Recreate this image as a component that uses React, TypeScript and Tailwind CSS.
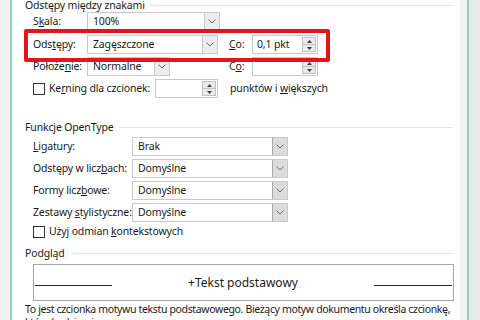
import React from "react";

const FONT = { fontFamily: '"Noto Sans", "Open Sans", sans-serif' };

function Chevron() {
  return (
    <svg width="8" height="5" viewBox="0 0 8 5" className="block">
      <path d="M0.5 0.5 L4 4 L7.5 0.5" fill="none" stroke="#6b6b6b" strokeWidth="1" />
    </svg>
  );
}

function Select({ value, width, dark }: { value: string; width: number; dark?: boolean }) {
  return (
    <div
      className="flex h-[19px] border border-[#c9c9c9] bg-white"
      style={{ width }}
    >
      <div className="flex-1 pl-[5px] leading-[17px] text-[#1a1a1a] truncate">{value}</div>
      <div
        className={
          dark
            ? "w-[15px] flex items-center justify-center bg-[#dcdcdc] border-l border-[#a9a9a9]"
            : "w-[15px] flex items-center justify-center bg-[#ececec] border-l border-[#c9c9c9]"
        }
      >
        <Chevron />
      </div>
    </div>
  );
}

function Spin({ value, width }: { value?: string; width: number }) {
  return (
    <div className="flex h-[19px] border border-[#c9c9c9] bg-white" style={{ width }}>
      <div className="flex-1 pl-[4px] leading-[17px] text-[#1a1a1a]">{value}</div>
      <div className="w-[14px] my-[1px] mr-[1px] flex flex-col border border-[#c2c2c2] bg-[#ebebeb]">
        <div className="flex-1 flex items-center justify-center border-b border-[#c2c2c2]">
          <svg width="5" height="3" viewBox="0 0 5 3">
            <path d="M0 3 L2.5 0 L5 3 Z" fill="#404040" />
          </svg>
        </div>
        <div className="flex-1 flex items-center justify-center">
          <svg width="5" height="3" viewBox="0 0 5 3">
            <path d="M0 0 L2.5 3 L5 0 Z" fill="#404040" />
          </svg>
        </div>
      </div>
    </div>
  );
}

function Checkbox() {
  return <div className="w-[12px] h-[12px] border border-[#333333] bg-white shrink-0" />;
}

function Heading({ text }: { text: string }) {
  return (
    <div className="flex items-center h-[14px] pl-[13px] pr-[7px]">
      <span className="leading-[14px] text-[#1a1a1a] pr-[6px] whitespace-nowrap">{text}</span>
      <div className="flex-1 h-px bg-[#e3e3e3]" />
    </div>
  );
}

export default function App() {
  return (
    <div
      className="w-[480px] h-[320px] overflow-hidden flex bg-[#ececec] text-[10.5px] tracking-[-0.15px]"
      style={FONT}
    >
      <div className="w-[10px] bg-[#f1f1f1]" />
      <div className="w-[2px] bg-[#92d2b6]" />
      <div className="w-[448px] bg-white relative">
        <div className="-mt-[2px]">
          <Heading text="Odstępy między znakami" />
        </div>

        <div className="pl-[21px] flex items-center h-[19px]">
          <div className="w-[54px] text-[#1a1a1a] whitespace-nowrap">
            S<u>k</u>ala:
          </div>
          <Select value="100%" width={133} />
        </div>

        <div className="pl-[21px] flex items-center h-[19px] mt-[4px]">
          <div className="w-[54px] text-[#1a1a1a] whitespace-nowrap">
            Ods<u>t</u>ępy:
          </div>
          <div className="w-[142px]">
            <Select value="Zagęszczone" width={131} />
          </div>
          <div className="w-[23px] text-[#1a1a1a]">
            <u>C</u>o:
          </div>
          <Spin value="0,1 pkt" width={66} />
        </div>

        <div className="pl-[21px] flex items-center h-[19px] mt-[3px]">
          <div className="w-[54px] text-[#1a1a1a] whitespace-nowrap">
            Położe<u>n</u>ie:
          </div>
          <div className="w-[142px]">
            <Select value="Normalne" width={83} />
          </div>
          <div className="w-[23px] text-[#1a1a1a]">
            C<u>o</u>:
          </div>
          <Spin width={66} />
        </div>

        <div className="pl-[21px] flex items-center h-[19px] mt-[3px]">
          <Checkbox />
          <div className="w-[110px] pl-[4px] text-[#1a1a1a] whitespace-nowrap">
            Ke<u>r</u>ning dla czcionek:
          </div>
          <Spin width={63} />
          <div className="pl-[12px] text-[#1a1a1a] whitespace-nowrap">
            punktów i <u>w</u>iększych
          </div>
        </div>

        <div className="mt-[22px]">
          <Heading text="Funkcje OpenType" />
        </div>

        {[
          { label: <><u>L</u>igatury:</>, value: "Brak" },
          { label: <>Odstępy w licz<u>b</u>ach:</>, value: "Domyślne" },
          { label: <>Formy licz<u>b</u>owe:</>, value: "Domyślne" },
          { label: <>Zestawy <u>s</u>tylistyczne:</>, value: "Domyślne" },
        ].map((row, i) => (
          <div key={i} className="pl-[21px] flex items-center h-[19px] mt-[3px]">
            <div className="w-[99px] text-[#1a1a1a] whitespace-nowrap">{row.label}</div>
            <Select value={row.value} width={156} dark />
          </div>
        ))}

        <div className="pl-[21px] flex items-center h-[14px] mt-[3px]">
          <Checkbox />
          <div className="pl-[4px] text-[#1a1a1a] whitespace-nowrap">
            Użyj odmian <u>k</u>ontekstowych
          </div>
        </div>

        <div className="mt-[7px]">
          <Heading text="Podgląd" />
        </div>

        <div className="ml-[21px] mr-[6px] mt-[4px] h-[37px] border border-[#a5a5a5] flex items-center px-[1px]">
          <div className="w-[77px] h-px bg-[#2a2a2a] mt-[6px]" />
          <div className="flex-1 text-center text-[12px] text-[#1a1a1a] leading-[16px] tracking-normal">
            +Tekst podstawowy
          </div>
          <div className="w-[78px] h-px bg-[#2a2a2a] mt-[6px]" />
        </div>

        <div className="pl-[13px] mt-[2px] leading-[13px] text-[#1a1a1a] tracking-[-0.35px]">
          To jest czcionka motywu tekstu podstawowego. Bieżący motyw dokumentu określa czcionkę, która będzie używana.
        </div>

        <div className="absolute left-[12px] top-[29px] w-[306px] h-[33px] border-[4px] border-[#e5131c] rounded-[2px]" />
      </div>
      <div className="w-[7px] bg-[#f3f3f3]" />
      <div className="w-[2px] bg-[#92d2b6]" />
      <div className="flex-1 bg-[#e9e9e9]" />
    </div>
  );
}
